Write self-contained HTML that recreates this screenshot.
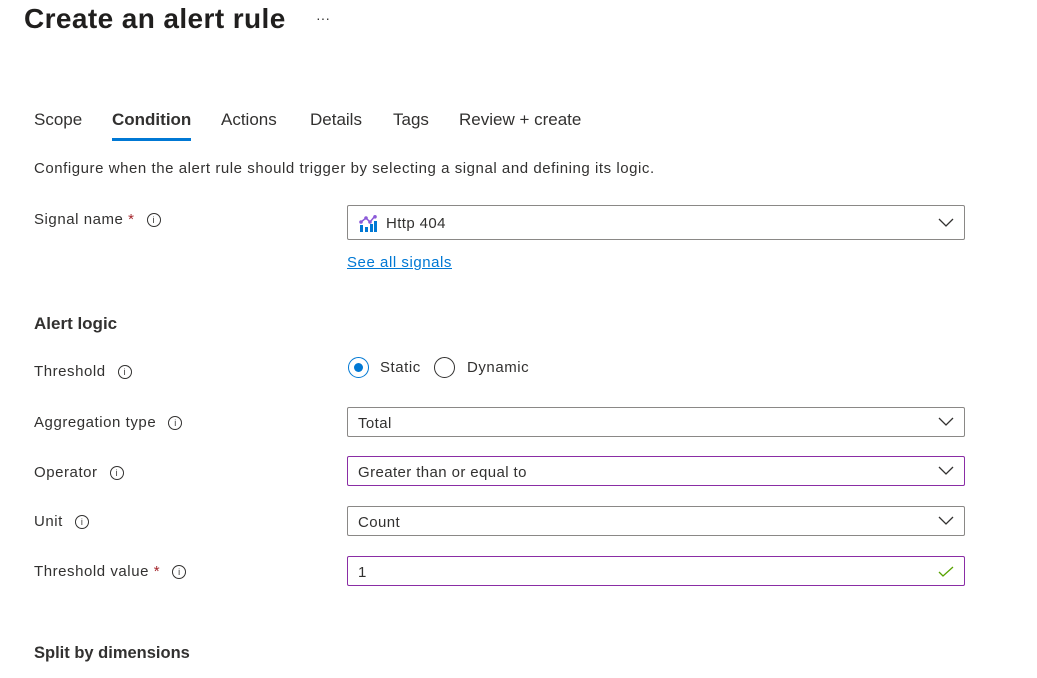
<!DOCTYPE html>
<html><head><style>
body{margin:0;width:1037px;height:678px;background:#fff;font-family:"Liberation Sans",sans-serif;color:#323130;position:relative;overflow:hidden}
.a{position:absolute;white-space:nowrap}
.t{font-size:15px;letter-spacing:0.55px}
.box{position:absolute;left:347px;width:618px;border:1px solid #8a8886;border-radius:2px;box-sizing:border-box;font-size:15px;letter-spacing:0.4px;padding-left:10px;display:flex;align-items:center;padding-top:2px}
.p{border-color:#8a2da5}
.chev{position:absolute;right:10px;top:50%;margin-top:-5px}
.i{display:inline-block;width:12px;height:12px;border:1px solid #323130;border-radius:50%;font-size:9px;line-height:12px;text-align:center;margin-left:12px;vertical-align:1px;letter-spacing:0}
.r{color:#a4262c}
</style></head><body>
<div class="a" style="left:24px;top:3px;font-size:28px;font-weight:600;color:#201f1e;letter-spacing:0.4px">Create an alert rule</div>
<div class="a" style="left:316px;top:10px;font-size:14px">···</div>
<div class="a" style="left:34px;top:110px;font-size:17px">Scope</div>
<div class="a" style="left:112px;top:110px;font-size:17px;font-weight:600">Condition</div>
<div style="position:absolute;left:112px;top:138px;width:79px;height:3px;background:#0078d4"></div>
<div class="a" style="left:221px;top:110px;font-size:17px">Actions</div>
<div class="a" style="left:310px;top:110px;font-size:17px">Details</div>
<div class="a" style="left:393px;top:110px;font-size:17px">Tags</div>
<div class="a" style="left:459px;top:110px;font-size:17px">Review + create</div>
<div class="a t" style="left:34px;top:160px">Configure when the alert rule should trigger by selecting a signal and defining its logic.</div>
<div class="a t" style="left:34px;top:211px">Signal name <span class="r">*</span><span class="i">i</span></div>
<div class="box" style="top:205px;height:35px">
<svg width="20" height="18" viewBox="0 0 20 18" style="margin-right:8px"><rect x="2" y="10" width="3" height="7" fill="#0078d4"/><rect x="7" y="12" width="3" height="5" fill="#0078d4"/><rect x="12" y="9" width="3" height="8" fill="#0078d4"/><rect x="16" y="6" width="3" height="11" fill="#0078d4"/><polyline points="3,7 8,3 12,7 17,1" stroke="#8c5ad8" stroke-width="1.5" fill="none"/><circle cx="3" cy="7" r="1.8" fill="#8c5ad8"/><circle cx="8" cy="3" r="1.8" fill="#8c5ad8"/><circle cx="12" cy="7" r="1.8" fill="#8c5ad8"/><circle cx="17" cy="1.8" r="1.8" fill="#8c5ad8"/></svg>Http 404
<svg class="chev" width="16" height="10" viewBox="0 0 16 10"><polyline points="1,1 8,8 15,1" stroke="#323130" stroke-width="1.3" fill="none"/></svg></div>
<div class="a t" style="left:347px;top:254px;color:#0078d4;text-decoration:underline">See all signals</div>
<div class="a" style="left:34px;top:314px;font-size:17px;font-weight:600">Alert logic</div>
<div class="a t" style="left:34px;top:363px">Threshold<span class="i">i</span></div>
<div style="position:absolute;left:348px;top:357px;width:21px;height:21px;border:1px solid #0078d4;border-radius:50%;box-sizing:border-box"><div style="position:absolute;left:5px;top:5px;width:9px;height:9px;border-radius:50%;background:#0078d4"></div></div>
<div class="a t" style="left:380px;top:359px">Static</div>
<div style="position:absolute;left:434px;top:357px;width:21px;height:21px;border:1px solid #323130;border-radius:50%;box-sizing:border-box"></div>
<div class="a t" style="left:467px;top:359px">Dynamic</div>
<div class="a t" style="left:34px;top:414px">Aggregation type<span class="i">i</span></div>
<div class="box" style="top:407px;height:30px">Total<svg class="chev" width="16" height="10" viewBox="0 0 16 10"><polyline points="1,1 8,8 15,1" stroke="#323130" stroke-width="1.3" fill="none"/></svg></div>
<div class="a t" style="left:34px;top:464px">Operator<span class="i">i</span></div>
<div class="box p" style="top:456px;height:30px">Greater than or equal to<svg class="chev" width="16" height="10" viewBox="0 0 16 10"><polyline points="1,1 8,8 15,1" stroke="#323130" stroke-width="1.3" fill="none"/></svg></div>
<div class="a t" style="left:34px;top:513px">Unit<span class="i">i</span></div>
<div class="box" style="top:506px;height:30px">Count<svg class="chev" width="16" height="10" viewBox="0 0 16 10"><polyline points="1,1 8,8 15,1" stroke="#323130" stroke-width="1.3" fill="none"/></svg></div>
<div class="a t" style="left:34px;top:563px">Threshold value <span class="r">*</span><span class="i">i</span></div>
<div class="box p" style="top:556px;height:30px">1<svg class="chev" width="16" height="12" viewBox="0 0 16 12"><polyline points="1,6 5,10 15,1" stroke="#57a300" stroke-width="1.3" fill="none"/></svg></div>
<div class="a" style="left:34px;top:644px;font-size:16.5px;font-weight:600">Split by dimensions</div>
</body></html>
